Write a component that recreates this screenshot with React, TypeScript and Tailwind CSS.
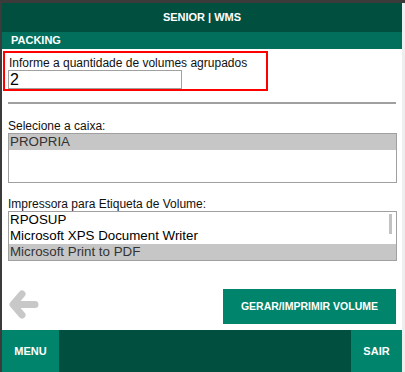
import React from "react";

export default function App() {
  const font = { fontFamily: '"Liberation Sans", Arial, sans-serif' };
  return (
    <div className="w-[405px] h-[372px] bg-white flex flex-col overflow-hidden" style={font}>
      <div className="h-[3px] bg-[#3b3b3b] shrink-0" />
      <div className="flex flex-1 min-h-0">
        <div className="w-[2px] bg-[#3b3b3b] shrink-0" />
        <div className="w-[400px] flex flex-col">
          <div className="h-[29px] bg-[#01503f] flex items-center justify-center text-white font-bold text-[11px]">
            SENIOR | WMS
          </div>
          <div className="h-[17px] bg-[#016f5c] flex items-center pl-[9px] text-white font-bold text-[11px]">
            PACKING
          </div>
          <div className="flex-1 flex flex-col">
            <div className="ml-[1px] mt-[2px] w-[265px] h-[40px] border-2 border-[#ff0000] pl-[3px] pt-[3px]">
              <div className="text-[12px] leading-[14px] text-[#111] whitespace-nowrap pl-[1px]">Informe a quantidade de volumes agrupados</div>
              <div className="w-[174px] h-[19px] border border-[#a0a0a0] text-[16px] leading-[17px] pl-[1px] text-black">2</div>
            </div>
            <div className="mx-[6px] mt-[11px] h-[2px] bg-[#a0a0a0]" />
            <div className="ml-[6px] mt-[15px] text-[12px] leading-[14px] text-[#111]">Selecione a caixa:</div>
            <div className="ml-[6px] w-[389px] h-[50px] border border-[#a0a0a0]">
              <div className="h-[16px] bg-[#c6c6c6] text-[13.33px] leading-[16px] text-[#333] pl-[1px]">PROPRIA</div>
            </div>
            <div className="ml-[6px] mt-[14px] text-[12px] leading-[14px] text-[#111]">Impressora para Etiqueta de Volume:</div>
            <div className="ml-[6px] w-[389px] h-[50px] border border-[#a0a0a0] relative">
              <div className="h-[16px] text-[13.33px] leading-[16px] text-black pl-[1px]">RPOSUP</div>
              <div className="h-[16px] text-[13.33px] leading-[16px] text-black pl-[1px]">Microsoft XPS Document Writer</div>
              <div className="h-[16px] bg-[#c6c6c6] text-[13.33px] leading-[16px] text-[#333] pl-[1px]">Microsoft Print to PDF</div>
              <div className="absolute right-[4px] top-[2px] w-[3px] h-[20px] bg-[#c2c2c2]" />
            </div>
            <div className="flex items-start justify-between mt-[28px] pl-[6px] pr-[6px]">
              <svg width="31" height="31" viewBox="0 0 31 31">
                <path d="M14 5 L5 15.5 L14 26 M5.5 15.5 L27 15.5" stroke="#c8c8c8" strokeWidth="7" strokeLinecap="round" strokeLinejoin="round" fill="none" />
              </svg>
              <div className="w-[173px] h-[35px] bg-[#00846c] text-white font-bold text-[10.5px] flex items-center justify-center">
                GERAR/IMPRIMIR VOLUME
              </div>
            </div>
          </div>
          <div className="h-[42px] bg-[#01503f] flex justify-between">
            <div className="w-[57px] bg-[#00846c] text-white font-bold text-[11px] flex items-center justify-center">MENU</div>
            <div className="w-[51px] bg-[#00846c] text-white font-bold text-[11px] flex items-center justify-center">SAIR</div>
          </div>
        </div>
        <div className="w-[3px] bg-[#eeeeee] shrink-0" />
      </div>
    </div>
  );
}
